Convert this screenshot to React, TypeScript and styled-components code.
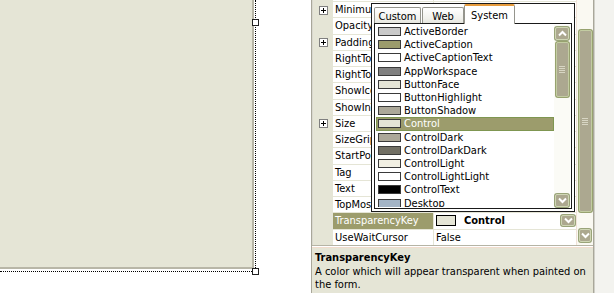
import React from "react";
import styled, { createGlobalStyle, css } from "styled-components";

const GlobalStyle = createGlobalStyle`
  html, body { margin: 0; padding: 0; background: #ffffff; }
  body { font-family: "DejaVu Sans Condensed", "Liberation Sans", sans-serif; font-size: 11px; color: #000; }
  * { box-sizing: border-box; }
`;

const FONT = `"DejaVu Sans Condensed", "Liberation Sans", sans-serif`;

const Page = styled.div`
  position: relative;
  width: 614px;
  height: 293px;
  overflow: hidden;
  display: flex;
  background: #ffffff;
  font-family: ${FONT};
  font-size: 11px;
`;

/* ---------- designer surface ---------- */
const Designer = styled.div`
  flex: none;
  width: 311px;
  height: 100%;
  background: #ffffff;
`;

const SelectionFrame = styled.div`
  position: relative;
  width: 256px;
  height: 272px;
  border-right: 1px dotted #000;
  border-bottom: 1px dotted #000;
`;

const FormSurface = styled.div`
  width: 254px;
  height: 269px;
  background: #e5e5d6;
  border-right: 2px solid #b8b6a7;
  border-bottom: 2px solid #b8b6a7;
`;

const Handle = styled.div<{ $top: number }>`
  position: absolute;
  left: 252px;
  top: ${(p) => p.$top}px;
  width: 7px;
  height: 7px;
  background: #fff;
  border: 1px solid #202020;
`;

/* ---------- property grid ---------- */
const PropertyPanel = styled.div`
  flex: none;
  width: 282px;
  height: 100%;
  display: flex;
  flex-direction: column;
  border-left: 1px solid #a9a79a;
  box-shadow: inset 1px 0 0 #d9d8cf;
`;

const GridArea = styled.div`
  flex: none;
  height: 245px;
  display: flex;
  overflow: hidden;
  padding-left: 1px;
`;

const Rows = styled.div`
  flex: 1;
  display: flex;
  flex-direction: column;
  margin-top: -14.25px;
`;

const Row = styled.div`
  flex: none;
  height: 16.25px;
  display: grid;
  grid-template-columns: 20px 100px 1px 1fr;
`;

const MarginCell = styled.div`
  background: #e5e5d6;
  display: flex;
  align-items: center;
  justify-content: center;
`;

const ExpandBox = styled.div`
  width: 9px;
  height: 9px;
  border: 1px solid #7f7f7f;
  background: #fff;
  position: relative;
  &::before {
    content: "";
    position: absolute;
    left: 1px;
    top: 3px;
    width: 5px;
    height: 1px;
    background: #000;
  }
  &::after {
    content: "";
    position: absolute;
    left: 3px;
    top: 1px;
    width: 1px;
    height: 5px;
    background: #000;
  }
`;

const cellText = css`
  display: flex;
  align-items: center;
  white-space: nowrap;
  overflow: hidden;
  border-bottom: 1px solid #e5e5d6;
`;

const NameCell = styled.div<{ $selected?: boolean }>`
  ${cellText};
  padding-left: 2px;
  background: ${(p) => (p.$selected ? "#9c9c6c" : "#ffffff")};
  color: ${(p) => (p.$selected ? "#ffffff" : "#000000")};
`;

const ColumnLine = styled.div`
  background: #e5e5d6;
`;

const ValueCell = styled.div`
  ${cellText};
  padding-left: 2px;
  padding-right: 1px;
  gap: 8px;
  background: #ffffff;
`;

const ValueSwatch = styled.div<{ $color: string }>`
  flex: none;
  width: 20px;
  height: 11px;
  border: 1px solid #000;
  background: ${(p) => p.$color};
`;

const BoldValue = styled.span`
  flex: 1;
  font-weight: bold;
`;

const ChevronButton = styled.div<{ $w: number; $h: number }>`
  flex: none;
  width: ${(p) => p.$w}px;
  height: ${(p) => p.$h}px;
  border-radius: 2px;
  background: #aca88f;
  border: 1px solid #cfd6b4;
  box-shadow: 0 0 0 1px #9aa479;
  display: flex;
  align-items: center;
  justify-content: center;
`;

const OuterScroll = styled.div`
  flex: none;
  width: 17px;
  height: 100%;
  background: #faf9f2;
  border-left: 1px solid #f0e2d8;
  display: flex;
  flex-direction: column;
  align-items: center;
  padding-top: 30px;
`;

const Thumb = styled.div<{ $h: number }>`
  flex: none;
  width: 13px;
  height: ${(p) => p.$h}px;
  background: #aca890;
  border: 1px solid #c3cca2;
  box-shadow: 0 0 0 1px #97a26f;
  border-radius: 2px;
  display: flex;
  align-items: center;
  justify-content: center;
`;

const Grip = styled.div`
  width: 6px;
  height: 7px;
  background: repeating-linear-gradient(
    to bottom,
    #d8d6c4 0px,
    #d8d6c4 1px,
    transparent 1px,
    transparent 2px
  );
`;

const OuterDown = styled.div`
  margin-top: 17px;
`;

const PanelRight = styled.div`
  flex: none;
  width: 1px;
  height: 100%;
  background: #a9a79a;
`;

const Splitter = styled.div`
  flex: none;
  height: 3px;
  border-top: 1px solid #b6b4a5;
  border-bottom: 1px solid #f2dccd;
  background: #ffffff;
`;

const Description = styled.div`
  flex: 1;
  background: #e5e5d6;
  padding: 3px 2px 0 3px;
  line-height: 13px;
`;

const DescTitle = styled.div`
  font-weight: bold;
  margin-bottom: 1px;
`;

const DescText = styled.div`
  width: 276px;
`;

const RightStrip = styled.div`
  flex: 1;
  height: 100%;
  background: #f3f3ef;
  border-left: 1px solid #d0d0c8;
`;

/* ---------- color picker popup ---------- */
const Popup = styled.div`
  position: absolute;
  left: 371px;
  top: 3px;
  width: 204px;
  height: 209px;
  background: #ffffff;
  border: 1px solid #1a1a1a;
  padding: 0 2px 2px 2px;
  display: flex;
  flex-direction: column;
`;

const TabStrip = styled.div`
  flex: none;
  height: 19px;
  display: flex;
  align-items: flex-end;
`;

const Tab = styled.div<{ $w: number; $selected?: boolean }>`
  flex: none;
  width: ${(p) => p.$w}px;
  height: ${(p) => (p.$selected ? 20 : 16)}px;
  margin-right: ${(p) => (p.$selected ? 0 : 1)}px;
  margin-left: ${(p) => (p.$selected ? -1 : 0)}px;
  margin-bottom: ${(p) => (p.$selected ? -1 : 0)}px;
  border: 1px solid #95958d;
  border-bottom: none;
  border-radius: 2px 2px 0 0;
  background: ${(p) =>
    p.$selected ? "#ffffff" : "linear-gradient(#ffffff, #f1f1ec 70%, #e6e6df)"};
  ${(p) => p.$selected && "border-top: 2px solid #e69b3c;"}
  position: relative;
  z-index: ${(p) => (p.$selected ? 2 : 1)};
  display: flex;
  align-items: center;
  justify-content: center;
  padding-top: ${(p) => (p.$selected ? 0 : 1)}px;
`;

const ListBox = styled.div`
  flex: 1;
  border: 1px solid #1a1a1a;
  display: flex;
  padding: 1px;
  overflow: hidden;
`;

const Items = styled.div`
  flex: 1;
  display: flex;
  flex-direction: column;
  overflow: hidden;
`;

const Item = styled.div<{ $selected?: boolean }>`
  flex: none;
  height: 13.2px;
  display: flex;
  align-items: center;
  gap: 3px;
  padding-left: 2px;
  white-space: nowrap;
  background: ${(p) => (p.$selected ? "#9c9c6c" : "transparent")};
  color: ${(p) => (p.$selected ? "#ffffff" : "#000000")};
  ${(p) => p.$selected && "box-shadow: inset 0 0 0 1px #7f9651;"}
`;

const ItemSwatch = styled.div<{ $color: string }>`
  flex: none;
  width: 23px;
  height: 9px;
  border: 1px solid #3a3a3a;
  background: ${(p) => p.$color};
`;

const InnerScroll = styled.div`
  flex: none;
  width: 16px;
  display: flex;
  flex-direction: column;
  align-items: center;
  padding-top: 2px;
  background: #fbfbf6;
`;

const InnerTrack = styled.div`
  flex: 1;
`;

const InnerThumbWrap = styled.div`
  margin-top: 2px;
`;

const Chevron = ({ up, size = 9 }: { up?: boolean; size?: number }) => (
  <svg width={size} height={size - 2} viewBox="0 0 9 7">
    <polyline
      points={up ? "1,5.5 4.5,2 8,5.5" : "1,1.5 4.5,5 8,1.5"}
      fill="none"
      stroke="#ffffff"
      strokeWidth="2"
    />
  </svg>
);

type Prop = { name: string; value?: string; expand?: boolean };

/* values of the rows hidden under the colour popup are not shown */
const props: Prop[] = [
  { name: "MinimizeBox" },
  { name: "MinimumSize", expand: true },
  { name: "Opacity" },
  { name: "Padding", expand: true },
  { name: "RightToLeft" },
  { name: "RightToLeftLayout" },
  { name: "ShowIcon" },
  { name: "ShowInTaskbar" },
  { name: "Size", expand: true },
  { name: "SizeGripStyle" },
  { name: "StartPosition" },
  { name: "Tag" },
  { name: "Text" },
  { name: "TopMost" },
  { name: "TransparencyKey", value: "Control" },
  { name: "UseWaitCursor", value: "False" },
];

const systemColors: [string, string][] = [
  ["ActiveBorder", "#c9c9c9"],
  ["ActiveCaption", "#9c9c6c"],
  ["ActiveCaptionText", "#ffffff"],
  ["AppWorkspace", "#808080"],
  ["ButtonFace", "#e5e5d6"],
  ["ButtonHighlight", "#ffffff"],
  ["ButtonShadow", "#aca899"],
  ["Control", "#e5e5d6"],
  ["ControlDark", "#aca899"],
  ["ControlDarkDark", "#716f64"],
  ["ControlLight", "#f1efe2"],
  ["ControlLightLight", "#ffffff"],
  ["ControlText", "#000000"],
  ["Desktop", "#a3b4c6"],
];

export default function App() {
  return (
    <Page>
      <GlobalStyle />
      <Designer>
        <SelectionFrame>
          <FormSurface />
          <Handle $top={19} />
          <Handle $top={268} />
        </SelectionFrame>
      </Designer>

      <PropertyPanel>
        <GridArea>
          <Rows>
            {props.map((p) => {
              const selected = p.name === "TransparencyKey";
              return (
                <Row key={p.name}>
                  <MarginCell>{p.expand && <ExpandBox />}</MarginCell>
                  <NameCell $selected={selected}>{p.name}</NameCell>
                  <ColumnLine />
                  <ValueCell>
                    {selected ? (
                      <>
                        <ValueSwatch $color="#e5e5d6" />
                        <BoldValue>{p.value}</BoldValue>
                        <ChevronButton $w={14} $h={11}>
                          <Chevron size={9} />
                        </ChevronButton>
                      </>
                    ) : (
                      p.value
                    )}
                  </ValueCell>
                </Row>
              );
            })}
          </Rows>
          <OuterScroll>
            <Thumb $h={182}>
              <Grip />
            </Thumb>
            <OuterDown>
              <ChevronButton $w={12} $h={13}>
                <Chevron size={9} />
              </ChevronButton>
            </OuterDown>
          </OuterScroll>
        </GridArea>
        <Splitter />
        <Description>
          <DescTitle>TransparencyKey</DescTitle>
          <DescText>A color which will appear transparent when painted on the form.</DescText>
        </Description>
      </PropertyPanel>
      <PanelRight />
      <RightStrip />

      <Popup>
        <TabStrip>
          <Tab $w={47}>Custom</Tab>
          <Tab $w={42}>Web</Tab>
          <Tab $w={51} $selected>
            System
          </Tab>
        </TabStrip>
        <ListBox>
          <Items>
            {systemColors.map(([name, color]) => (
              <Item key={name} $selected={name === "Control"}>
                <ItemSwatch $color={color} />
                {name}
              </Item>
            ))}
          </Items>
          <InnerScroll>
            <ChevronButton $w={14} $h={13}>
              <Chevron up size={9} />
            </ChevronButton>
            <InnerThumbWrap>
              <Thumb $h={55}>
                <Grip />
              </Thumb>
            </InnerThumbWrap>
            <InnerTrack />
            <ChevronButton $w={14} $h={13}>
              <Chevron size={9} />
            </ChevronButton>
          </InnerScroll>
        </ListBox>
      </Popup>
    </Page>
  );
}
